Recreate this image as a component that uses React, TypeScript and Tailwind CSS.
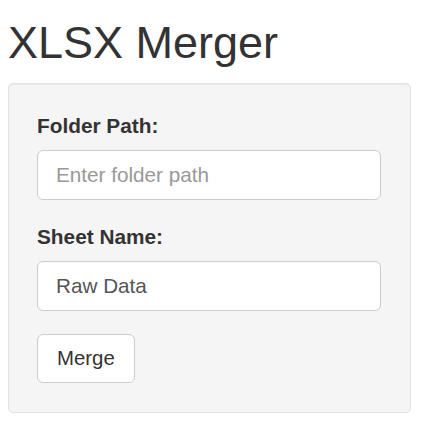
export default function App() {
  return (
    <div className="min-h-[444px] bg-white px-2 text-[#333]" style={{ fontFamily: '"Liberation Sans", Arial, sans-serif' }}>
      <h1 className="pt-[20px] text-[45px] leading-none font-normal">XLSX Merger</h1>

      {/* Form well */}
      <form
        className="mt-[18px] w-[403px] rounded-[5px] border border-[#e3e3e3] bg-[#f5f5f5] pt-[28px] pb-[29px] pl-[28px] pr-[29px] shadow-[inset_0_1px_1px_rgba(0,0,0,0.05)]"
        onSubmit={e => e.preventDefault()}
      >
        <div className="mb-[23px]">
          <label className="mb-[10px] block text-[20.8px] leading-[28px] font-bold">Folder Path:</label>
          <input
            type="text"
            placeholder="Enter folder path"
            className="block h-[50px] w-full rounded-[6px] border border-[#ccc] bg-white px-[18px] text-[20.7px] text-[#555] placeholder:text-[#999] outline-none"
          />
        </div>
        <div className="mb-[23px]">
          <label className="mb-[10px] block text-[20.8px] leading-[28px] font-bold">Sheet Name:</label>
          <input
            type="text"
            defaultValue="Raw Data"
            className="block h-[50px] w-full rounded-[6px] border border-[#ccc] bg-white px-[18px] text-[20.7px] text-[#555] outline-none"
          />
        </div>
        <button
          type="submit"
          className="h-[49px] rounded-[6px] border border-[#ccc] bg-white px-[19px] text-[20.4px] text-[#333]"
        >
          Merge
        </button>
      </form>
    </div>
  )
}
